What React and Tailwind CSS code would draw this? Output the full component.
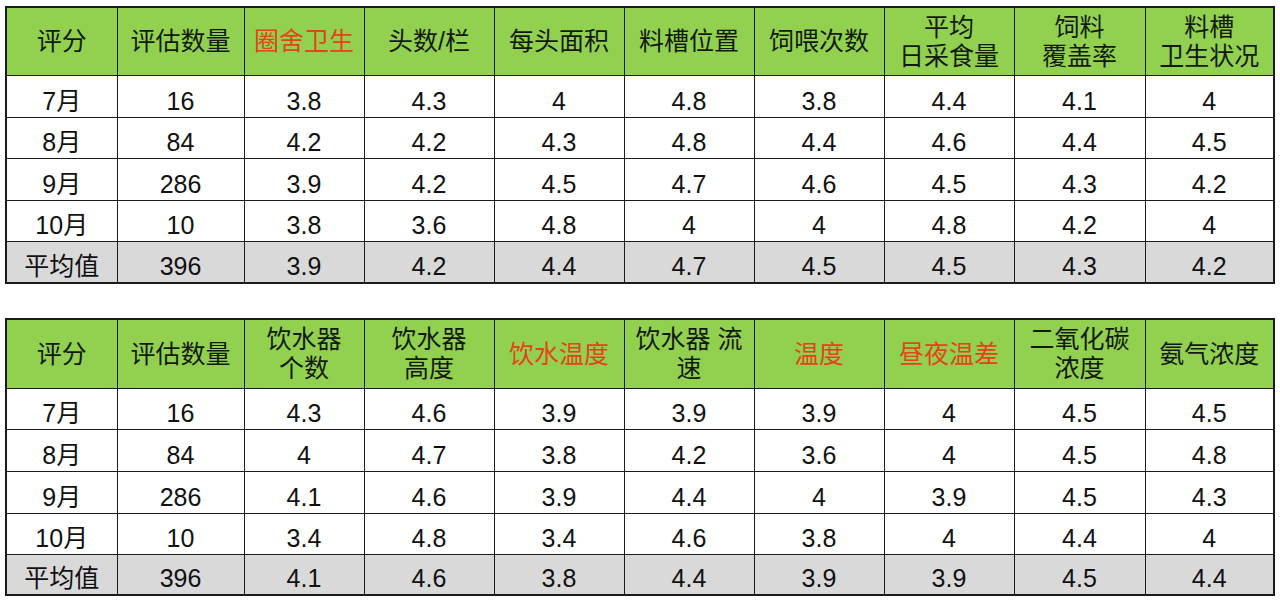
import React from 'react';

const RED = 'text-[#e5431a]';

// column widths, written out so Tailwind picks them up
const cols = ['w-[111px]', 'w-[127px]', 'w-[120px]', 'w-[130px]', 'w-[130px]', 'w-[130px]', 'w-[130px]', 'w-[130px]', 'w-[131px]', 'w-[129px]'];

const table1 = {
  headers: [
    ['评分'],
    ['评估数量'],
    ['圈舍卫生', true],
    ['头数/栏'],
    ['每头面积'],
    ['料槽位置'],
    ['饲喂次数'],
    ['平均\n日采食量'],
    ['饲料\n覆盖率'],
    ['料槽\n卫生状况'],
  ],
  rows: [
    ['7月', '16', '3.8', '4.3', '4', '4.8', '3.8', '4.4', '4.1', '4'],
    ['8月', '84', '4.2', '4.2', '4.3', '4.8', '4.4', '4.6', '4.4', '4.5'],
    ['9月', '286', '3.9', '4.2', '4.5', '4.7', '4.6', '4.5', '4.3', '4.2'],
    ['10月', '10', '3.8', '3.6', '4.8', '4', '4', '4.8', '4.2', '4'],
    ['平均值', '396', '3.9', '4.2', '4.4', '4.7', '4.5', '4.5', '4.3', '4.2'],
  ],
  headHeight: 'h-[68px]',
  rowHeights: ['h-[42px]', 'h-[41px]', 'h-[42px]', 'h-[41px]', 'h-[42px]'],
};

const table2 = {
  headers: [
    ['评分'],
    ['评估数量'],
    ['饮水器\n个数'],
    ['饮水器\n高度'],
    ['饮水温度', true],
    ['饮水器 流\n速'],
    ['温度', true],
    ['昼夜温差', true],
    ['二氧化碳\n浓度'],
    ['氨气浓度'],
  ],
  rows: [
    ['7月', '16', '4.3', '4.6', '3.9', '3.9', '3.9', '4', '4.5', '4.5'],
    ['8月', '84', '4', '4.7', '3.8', '4.2', '3.6', '4', '4.5', '4.8'],
    ['9月', '286', '4.1', '4.6', '3.9', '4.4', '4', '3.9', '4.5', '4.3'],
    ['10月', '10', '3.4', '4.8', '3.4', '4.6', '3.8', '4', '4.4', '4'],
    ['平均值', '396', '4.1', '4.6', '3.8', '4.4', '3.9', '3.9', '4.5', '4.4'],
  ],
  headHeight: 'h-[69px]',
  rowHeights: ['h-[41px]', 'h-[42px]', 'h-[42px]', 'h-[41px]', 'h-[41px]'],
};

function ScoreTable({ data }) {
  const last = data.rows.length - 1;
  return (
    <table className="table-fixed border-collapse border-2 border-[#1b1b1b] w-[1268px]">
      <colgroup>
        {cols.map((c, i) => (
          <col key={i} className={c} />
        ))}
      </colgroup>
      <thead>
        <tr className={data.headHeight}>
          {data.headers.map(([label, red], i) => (
            <th
              key={i}
              className={`bg-[#92d050] border border-[#1b1b1b] font-normal align-middle text-center leading-[29px] whitespace-pre-line pt-px ${red ? RED : 'text-[#141a10]'}`}
            >
              {label}
            </th>
          ))}
        </tr>
      </thead>
      <tbody>
        {data.rows.map((row, r) => (
          <tr key={r} className={data.rowHeights[r]}>
            {row.map((cell, i) => (
              <td
                key={i}
                className={`border border-[#1b1b1b] text-center align-bottom leading-[30px] pb-px text-[#111] ${r === last ? 'bg-[#d9d9d9]' : 'bg-white'}`}
              >
                {cell}
              </td>
            ))}
          </tr>
        ))}
      </tbody>
    </table>
  );
}

export default function App() {
  return (
    <div className="w-[1280px] h-[600px] bg-white pl-[5px] pt-[6px] text-[25px] overflow-hidden font-['Liberation_Sans','Noto_Sans_CJK_SC',sans-serif]">
      <div className="flex flex-col gap-[34px]">
        <ScoreTable data={table1} />
        <ScoreTable data={table2} />
      </div>
    </div>
  );
}
